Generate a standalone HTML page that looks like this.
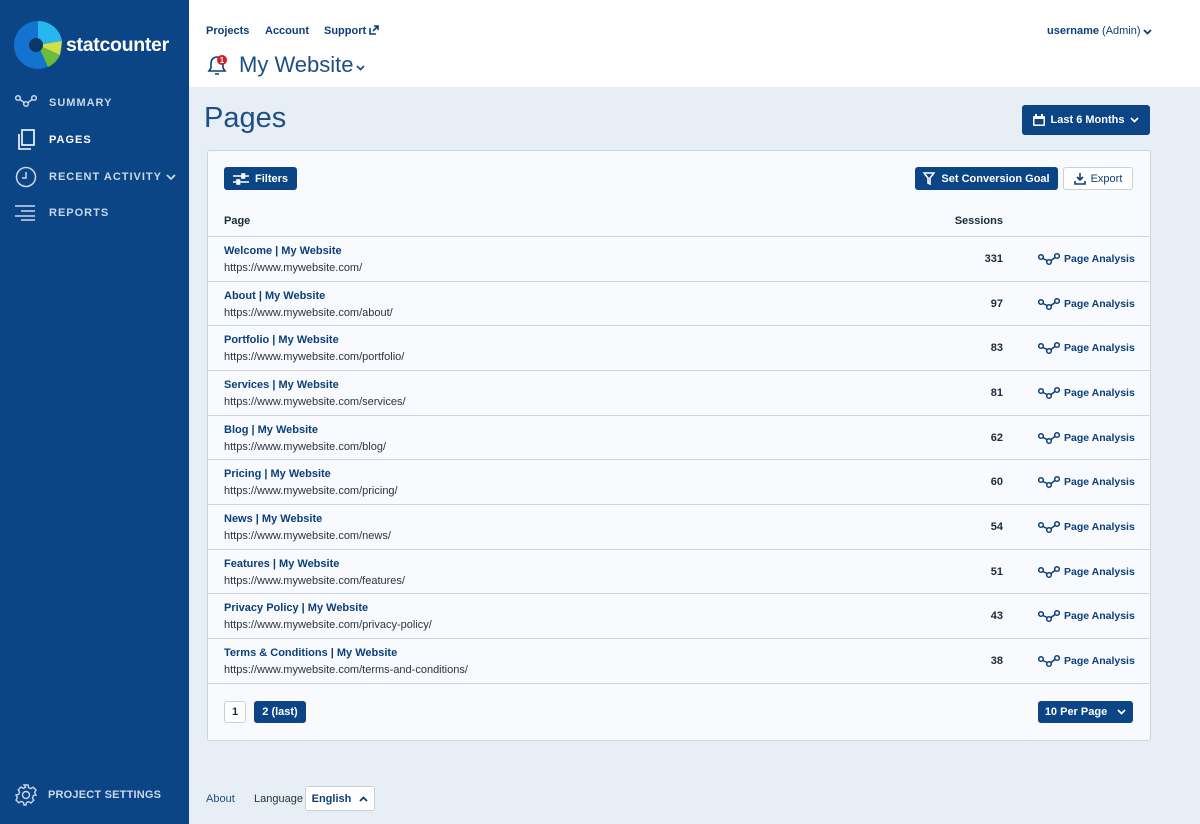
<!DOCTYPE html><html><head><meta charset="utf-8"><style>
*{box-sizing:border-box;margin:0;padding:0}
body{width:1200px;height:824px;overflow:hidden;font-family:"Liberation Sans",sans-serif;background:#e8eef5;position:relative;color:#1b2a3a}
.sb{position:absolute;left:0;top:0;width:189px;height:824px;background:#0b4586}
.nav{position:absolute;left:49px;color:#c9d9ec;font-size:11px;font-weight:bold;letter-spacing:1px;white-space:nowrap}
.nav.act{color:#fff}
.top{position:absolute;left:189px;top:0;width:1011px;height:87px;background:#fff}
.tl{position:absolute;top:25px;font-size:11px;font-weight:bold;color:#0b3f7a;white-space:nowrap}
.btn{position:absolute;background:#0b4586;color:#fff;font-weight:bold;font-size:11px;border-radius:3px;display:flex;align-items:center;justify-content:center;gap:6px;white-space:nowrap}
.card{position:absolute;left:207px;top:150px;width:944px;height:591px;background:#f8fafd;border:1px solid #cbd5e0;border-radius:3px}
.row{position:absolute;left:0;width:942px;height:45px;border-top:1px solid #cdd6e0}
.row .t{position:absolute;left:16px;top:8px;font-size:11px;font-weight:bold;color:#0b3f7a}
.row .u{position:absolute;left:16px;top:25px;font-size:11px;color:#2a3440}
.row .n{position:absolute;right:147px;top:16px;font-size:11px;font-weight:bold}
.row .pa{position:absolute;left:830px;top:15px;font-size:10.5px;font-weight:bold;color:#0b3f7a;display:flex;align-items:center;gap:4px;white-space:nowrap}
</style></head><body>
<div class="sb">
<svg style="position:absolute;left:14px;top:21px" width="48" height="48" viewBox="0 0 48 48"><circle cx="24" cy="24" r="24" fill="#1573d0"/><path d="M24 0A24 24 0 0 1 48 20L24 24Z" fill="#27b7ee"/><path d="M24 24L48 20L46 34Z" fill="#cfe04a"/><path d="M24 24L46 34A24 24 0 0 1 34 46Z" fill="#6cbb3d"/><circle cx="22" cy="24" r="7" fill="#0b3668"/></svg>
<div style="position:absolute;left:66px;top:34px;color:#fff;font-size:19.5px;font-weight:bold;letter-spacing:-.3px">statcounter</div>
<svg style="position:absolute;left:15px;top:94px" width="22" height="14" fill="none" stroke="#c9d9ec" stroke-width="1.5"><circle cx="3" cy="4" r="2.3"/><circle cx="11" cy="10" r="2.3"/><circle cx="19" cy="4" r="2.3"/><path d="M5 5.5L9 8.5M13 8.5L17 5.5"/></svg>
<div class="nav" style="top:97px">SUMMARY</div>
<svg style="position:absolute;left:16px;top:129px" width="20" height="22" fill="none" stroke="#fff" stroke-width="1.6"><rect x="6" y="1" width="12" height="15"/><path d="M3 5v15h12"/></svg>
<div class="nav act" style="top:134px">PAGES</div>
<svg style="position:absolute;left:15px;top:166px" width="22" height="22" fill="none" stroke="#c9d9ec" stroke-width="1.5"><circle cx="11" cy="11" r="9.5"/><path d="M11 6v6H7"/></svg>
<div class="nav" style="top:171px">RECENT ACTIVITY</div>
<svg style="position:absolute;left:166px;top:174px" width="10" height="7" fill="none" stroke="#c9d9ec" stroke-width="1.8"><path d="M1 1l4 4 4-4"/></svg>
<svg style="position:absolute;left:15px;top:205px" width="22" height="16" stroke="#c9d9ec" stroke-width="1.5"><path d="M0 1h20M6 6h14M0 11h20M6 15h14"/></svg>
<div class="nav" style="top:207px">REPORTS</div>
<svg style="position:absolute;left:15px;top:784px" width="22" height="22" fill="none" stroke="#c9d9ec" stroke-width="1.4"><circle cx="11" cy="11" r="3.5"/><path d="M9 1h4l.6 2.6 2.3 1 2.3-1.4 2.8 2.8-1.4 2.3 1 2.3L21 11l-2.6.6-1 2.3 1.4 2.3-2.8 2.8-2.3-1.4-2.3 1L11 21h-2l-.6-2.6-2.3-1-2.3 1.4-2.8-2.8 1.4-2.3-1-2.3L1 11l2.6-.6 1-2.3-1.4-2.3 2.8-2.8 2.3 1.4 2.3-1z"/></svg>
<div class="nav" style="top:789px;left:48px;letter-spacing:.2px">PROJECT SETTINGS</div>
</div>
<div class="top">
<div class="tl" style="left:17px">Projects</div><div class="tl" style="left:76px">Account</div><div class="tl" style="left:135px">Support</div>
<svg style="position:absolute;left:180px;top:25px" width="10" height="10" fill="none" stroke="#0b3f7a" stroke-width="1.6"><path d="M1 3v6h6M4 6l5-5M5 1h4v4"/></svg>
<div class="tl" style="left:858px">username <span style="font-weight:normal">(Admin)</span></div>
<svg style="position:absolute;left:954px;top:29px" width="9" height="6" fill="none" stroke="#0b3f7a" stroke-width="1.8"><path d="M1 1l3.5 3.5L8 1"/></svg>
<svg style="position:absolute;left:16px;top:53px" width="24" height="24" fill="none" stroke="#0b3f7a" stroke-width="1.6"><path d="M4 18h16l-2-3V10a6 6 0 0 0-12 0v5z M10 21h4"/><circle cx="17" cy="7" r="5" fill="#d01f25" stroke="none"/><text x="17" y="10" font-size="8" fill="#fff" stroke="none" text-anchor="middle" font-family="Liberation Sans" font-weight="bold">1</text></svg>
<div style="position:absolute;left:50px;top:52px;font-size:22px;color:#1d4f86">My Website</div>
<svg style="position:absolute;left:167px;top:65px" width="9" height="6" fill="none" stroke="#1d4f86" stroke-width="1.8"><path d="M1 1l3.5 3.5L8 1"/></svg>
</div>
<div style="position:absolute;left:204px;top:102px;font-size:29px;color:#1d4f86">Pages</div>
<div class="btn" style="left:1022px;top:105px;width:128px;height:30px"><svg width="12" height="12" fill="#fff"><rect x="0" y="2" width="12" height="10" rx="1"/><rect x="1.5" y="5" width="9" height="5.5" fill="#0b4586"/><rect x="2" y="0" width="2" height="3"/><rect x="8" y="0" width="2" height="3"/></svg>Last 6 Months <svg width="9" height="6" fill="none" stroke="#fff" stroke-width="1.8"><path d="M1 1l3.5 3.5L8 1"/></svg></div>
<div class="card">
<div class="btn" style="left:16px;top:16px;width:73px;height:23px"><svg width="16" height="12" stroke="#fff" stroke-width="1.6"><path d="M0 3h16M0 9h16"/><rect x="9" y="1" width="2.5" height="4" fill="#fff"/><rect x="4" y="7" width="2.5" height="4" fill="#fff"/></svg>Filters</div>
<div class="btn" style="left:707px;top:16px;width:143px;height:23px"><svg width="12" height="13" fill="none" stroke="#fff" stroke-width="1.6"><path d="M1 1h10L7 6v6L5 11V6z"/></svg>Set Conversion Goal</div>
<div style="position:absolute;left:855px;top:16px;width:70px;height:23px;border:1px solid #c6d0db;border-radius:3px;background:#fff;font-size:11px;color:#0b3f7a;display:flex;align-items:center;justify-content:center;gap:5px"><svg width="12" height="12" fill="none" stroke="#0b3f7a" stroke-width="1.6"><path d="M6 0v7M3 4l3 3 3-3M1 8v3h10V8"/></svg>Export</div>
<div style="position:absolute;left:16px;top:64px;font-size:11px;font-weight:bold">Page</div>
<div style="position:absolute;right:147px;top:64px;font-size:11px;font-weight:bold">Sessions</div>
<div class="row" style="top:85px"><div class="t">Welcome | My Website</div><div class="u">https://www.mywebsite.com/</div><div class="n">331</div><div class="pa"><svg width="22" height="14" fill="none" stroke="#0b3f7a" stroke-width="1.5"><circle cx="3" cy="5" r="2.3"/><circle cx="11" cy="10" r="2.3"/><circle cx="19" cy="4" r="2.3"/><path d="M5 6.5L9 8.5M13 8.5L17 5.5"/></svg>Page Analysis</div></div>
<div class="row" style="top:130px"><div class="t">About | My Website</div><div class="u">https://www.mywebsite.com/about/</div><div class="n">97</div><div class="pa"><svg width="22" height="14" fill="none" stroke="#0b3f7a" stroke-width="1.5"><circle cx="3" cy="5" r="2.3"/><circle cx="11" cy="10" r="2.3"/><circle cx="19" cy="4" r="2.3"/><path d="M5 6.5L9 8.5M13 8.5L17 5.5"/></svg>Page Analysis</div></div>
<div class="row" style="top:174px"><div class="t">Portfolio | My Website</div><div class="u">https://www.mywebsite.com/portfolio/</div><div class="n">83</div><div class="pa"><svg width="22" height="14" fill="none" stroke="#0b3f7a" stroke-width="1.5"><circle cx="3" cy="5" r="2.3"/><circle cx="11" cy="10" r="2.3"/><circle cx="19" cy="4" r="2.3"/><path d="M5 6.5L9 8.5M13 8.5L17 5.5"/></svg>Page Analysis</div></div>
<div class="row" style="top:219px"><div class="t">Services | My Website</div><div class="u">https://www.mywebsite.com/services/</div><div class="n">81</div><div class="pa"><svg width="22" height="14" fill="none" stroke="#0b3f7a" stroke-width="1.5"><circle cx="3" cy="5" r="2.3"/><circle cx="11" cy="10" r="2.3"/><circle cx="19" cy="4" r="2.3"/><path d="M5 6.5L9 8.5M13 8.5L17 5.5"/></svg>Page Analysis</div></div>
<div class="row" style="top:264px"><div class="t">Blog | My Website</div><div class="u">https://www.mywebsite.com/blog/</div><div class="n">62</div><div class="pa"><svg width="22" height="14" fill="none" stroke="#0b3f7a" stroke-width="1.5"><circle cx="3" cy="5" r="2.3"/><circle cx="11" cy="10" r="2.3"/><circle cx="19" cy="4" r="2.3"/><path d="M5 6.5L9 8.5M13 8.5L17 5.5"/></svg>Page Analysis</div></div>
<div class="row" style="top:308px"><div class="t">Pricing | My Website</div><div class="u">https://www.mywebsite.com/pricing/</div><div class="n">60</div><div class="pa"><svg width="22" height="14" fill="none" stroke="#0b3f7a" stroke-width="1.5"><circle cx="3" cy="5" r="2.3"/><circle cx="11" cy="10" r="2.3"/><circle cx="19" cy="4" r="2.3"/><path d="M5 6.5L9 8.5M13 8.5L17 5.5"/></svg>Page Analysis</div></div>
<div class="row" style="top:353px"><div class="t">News | My Website</div><div class="u">https://www.mywebsite.com/news/</div><div class="n">54</div><div class="pa"><svg width="22" height="14" fill="none" stroke="#0b3f7a" stroke-width="1.5"><circle cx="3" cy="5" r="2.3"/><circle cx="11" cy="10" r="2.3"/><circle cx="19" cy="4" r="2.3"/><path d="M5 6.5L9 8.5M13 8.5L17 5.5"/></svg>Page Analysis</div></div>
<div class="row" style="top:398px"><div class="t">Features | My Website</div><div class="u">https://www.mywebsite.com/features/</div><div class="n">51</div><div class="pa"><svg width="22" height="14" fill="none" stroke="#0b3f7a" stroke-width="1.5"><circle cx="3" cy="5" r="2.3"/><circle cx="11" cy="10" r="2.3"/><circle cx="19" cy="4" r="2.3"/><path d="M5 6.5L9 8.5M13 8.5L17 5.5"/></svg>Page Analysis</div></div>
<div class="row" style="top:442px"><div class="t">Privacy Policy | My Website</div><div class="u">https://www.mywebsite.com/privacy-policy/</div><div class="n">43</div><div class="pa"><svg width="22" height="14" fill="none" stroke="#0b3f7a" stroke-width="1.5"><circle cx="3" cy="5" r="2.3"/><circle cx="11" cy="10" r="2.3"/><circle cx="19" cy="4" r="2.3"/><path d="M5 6.5L9 8.5M13 8.5L17 5.5"/></svg>Page Analysis</div></div>
<div class="row" style="top:487px;height:46px;border-bottom:1px solid #cdd6e0"><div class="t">Terms &amp; Conditions | My Website</div><div class="u">https://www.mywebsite.com/terms-and-conditions/</div><div class="n">38</div><div class="pa"><svg width="22" height="14" fill="none" stroke="#0b3f7a" stroke-width="1.5"><circle cx="3" cy="5" r="2.3"/><circle cx="11" cy="10" r="2.3"/><circle cx="19" cy="4" r="2.3"/><path d="M5 6.5L9 8.5M13 8.5L17 5.5"/></svg>Page Analysis</div></div>
<div style="position:absolute;left:16px;top:550px;width:22px;height:22px;border:1px solid #c6d0db;border-radius:3px;background:#fff;font-size:11px;font-weight:bold;display:flex;align-items:center;justify-content:center">1</div>
<div class="btn" style="left:46px;top:550px;width:52px;height:22px">2 (last)</div>
<div class="btn" style="left:830px;top:550px;width:95px;height:22px;gap:10px">10 Per Page <svg width="9" height="6" fill="none" stroke="#fff" stroke-width="1.8"><path d="M1 1l3.5 3.5L8 1"/></svg></div>
</div>
<div style="position:absolute;left:206px;top:793px;font-size:11px;color:#1d4f86">About</div>
<div style="position:absolute;left:254px;top:793px;font-size:11px;color:#2a3440">Language</div>
<div style="position:absolute;left:305px;top:786px;width:70px;height:25px;border:1px solid #c6d0db;border-radius:3px;background:#fff;font-size:11px;font-weight:bold;color:#0b3f7a;display:flex;align-items:center;justify-content:center;gap:8px;white-space:nowrap">English <svg width="9" height="6" fill="none" stroke="#0b3f7a" stroke-width="1.8"><path d="M1 5l3.5-3.5L8 5"/></svg></div>
</body></html>
